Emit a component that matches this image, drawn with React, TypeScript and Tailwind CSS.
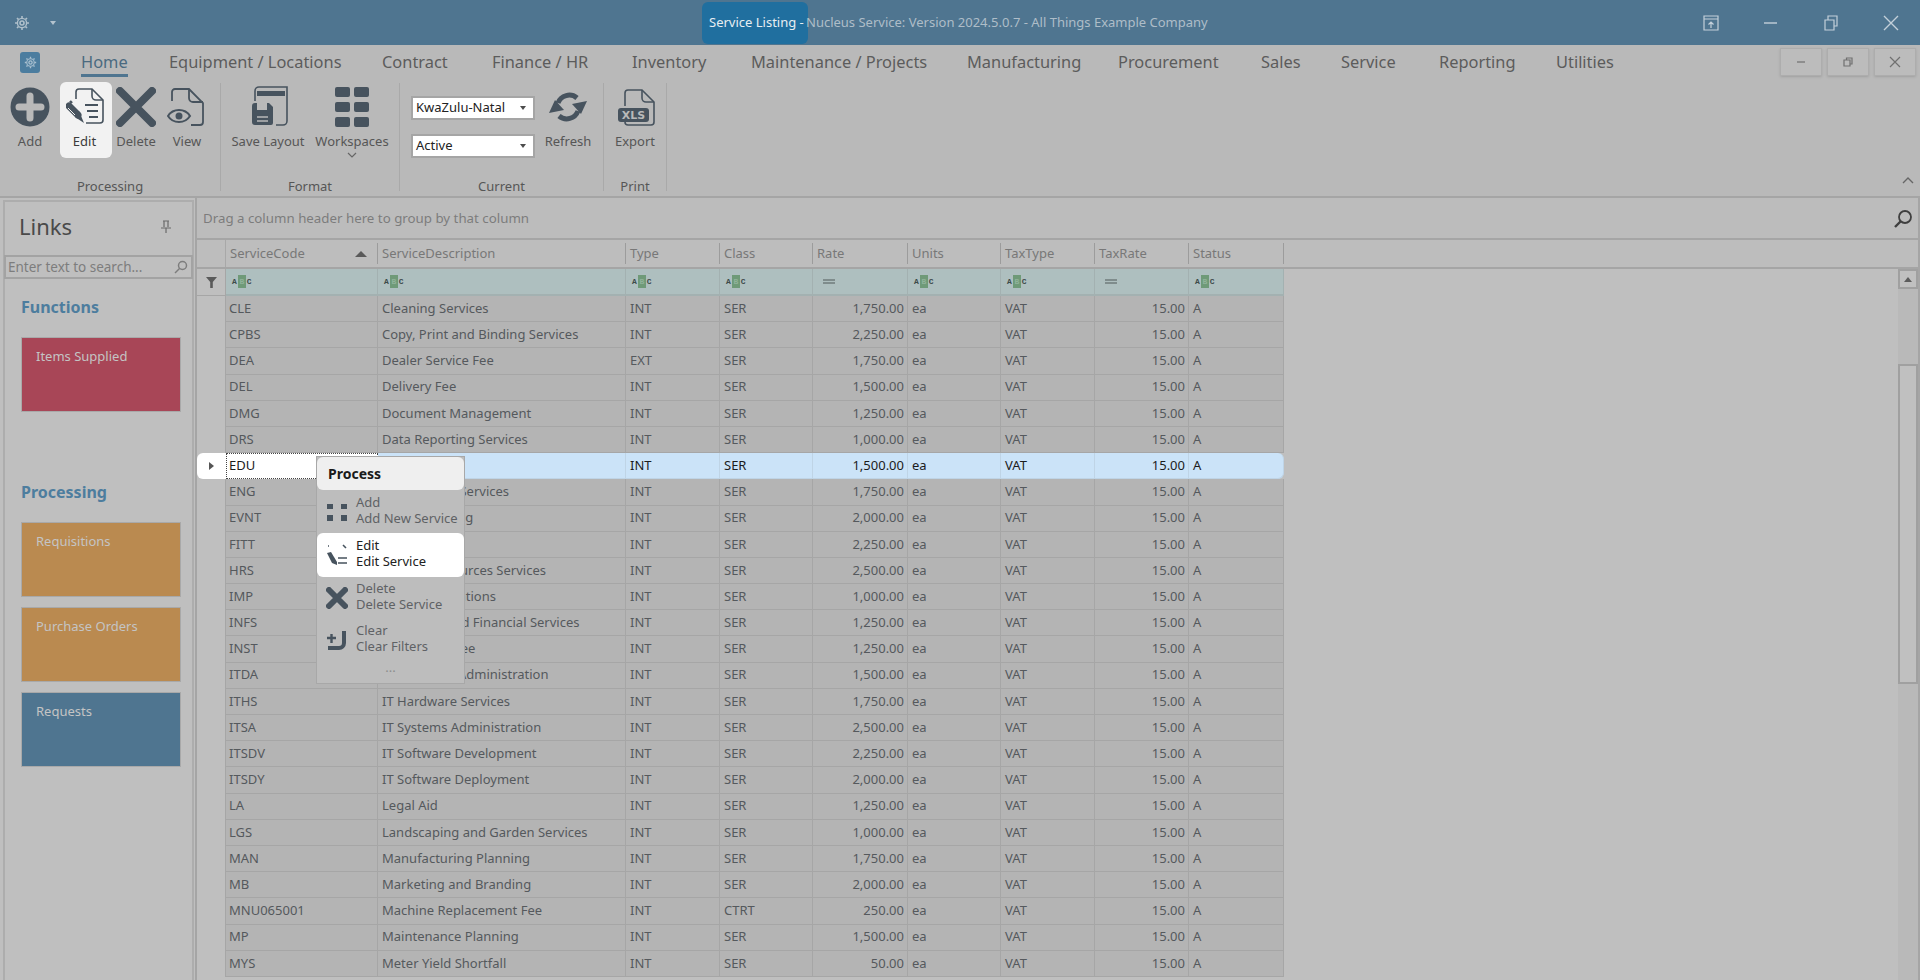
import type { ReactNode } from "react";

const fontStack = "font-['Noto_Sans','DejaVu_Sans',sans-serif]";
const gridCols = "grid grid-cols-[29px_152px_248px_94px_93px_95px_93px_94px_94px_95px]";

type ServiceRow = [string, string, string, string, string];

const rows: ServiceRow[] = [
  ["CLE", "Cleaning Services", "INT", "SER", "1,750.00"],
  ["CPBS", "Copy, Print and Binding Services", "INT", "SER", "2,250.00"],
  ["DEA", "Dealer Service Fee", "EXT", "SER", "1,750.00"],
  ["DEL", "Delivery Fee", "INT", "SER", "1,500.00"],
  ["DMG", "Document Management", "INT", "SER", "1,250.00"],
  ["DRS", "Data Reporting Services", "INT", "SER", "1,000.00"],
  ["EDU", "Education", "INT", "SER", "1,500.00"],
  ["ENG", "Engineering Services", "INT", "SER", "1,750.00"],
  ["EVNT", "Event Planning", "INT", "SER", "2,000.00"],
  ["FITT", "Fitting", "INT", "SER", "2,250.00"],
  ["HRS", "Human Resources Services", "INT", "SER", "2,500.00"],
  ["IMP", "Import Operations", "INT", "SER", "1,000.00"],
  ["INFS", "Insurance and Financial Services", "INT", "SER", "1,250.00"],
  ["INST", "Installation Fee", "INT", "SER", "1,250.00"],
  ["ITDA", "IT Database Administration", "INT", "SER", "1,500.00"],
  ["ITHS", "IT Hardware Services", "INT", "SER", "1,750.00"],
  ["ITSA", "IT Systems Administration", "INT", "SER", "2,500.00"],
  ["ITSDV", "IT Software Development", "INT", "SER", "2,250.00"],
  ["ITSDY", "IT Software Deployment", "INT", "SER", "2,000.00"],
  ["LA", "Legal Aid", "INT", "SER", "1,250.00"],
  ["LGS", "Landscaping and Garden Services", "INT", "SER", "1,000.00"],
  ["MAN", "Manufacturing Planning", "INT", "SER", "1,750.00"],
  ["MB", "Marketing and Branding", "INT", "SER", "2,000.00"],
  ["MNU065001", "Machine Replacement Fee", "INT", "CTRT", "250.00"],
  ["MP", "Maintenance Planning", "INT", "SER", "1,500.00"],
  ["MYS", "Meter Yield Shortfall", "INT", "SER", "50.00"],
];

const tabs: [string, string][] = [
  ["Home", "w-[88px]"],
  ["Equipment / Locations", "w-[213px]"],
  ["Contract", "w-[110px]"],
  ["Finance / HR", "w-[140px]"],
  ["Inventory", "w-[119px]"],
  ["Maintenance / Projects", "w-[216px]"],
  ["Manufacturing", "w-[151px]"],
  ["Procurement", "w-[143px]"],
  ["Sales", "w-[80px]"],
  ["Service", "w-[98px]"],
  ["Reporting", "w-[117px]"],
  ["Utilities", "w-[60px]"],
];

const headers = ["ServiceCode", "ServiceDescription", "Type", "Class", "Rate", "Units", "TaxType", "TaxRate", "Status"];
const ink = "#47535e";

function Gear({ color, size = 16 }: { color: string; size?: number }) {
  return (
    <svg width={size} height={size} viewBox="0 0 16 16" fill="none" stroke={color} strokeWidth="1.6">
      <circle cx="8" cy="8" r="2" />
      <circle cx="8" cy="8" r="4.6" strokeWidth="1.4" />
      <path d="M8 1v2M8 13v2M1 8h2M13 8h2M3 3l1.4 1.4M11.6 11.6 13 13M13 3l-1.4 1.4M4.4 11.6 3 13" />
    </svg>
  );
}

function AddIcon() {
  return (
    <svg width="40" height="40" viewBox="0 0 40 40">
      <circle cx="20" cy="20" r="19.5" fill={ink} />
      <path d="M20 9v22M9 20h22" stroke="#b9b9b9" strokeWidth="7" strokeLinecap="round" />
    </svg>
  );
}

function EditIcon() {
  return (
    <svg width="40" height="40" viewBox="0 0 40 40" fill="none" stroke={ink} strokeWidth="1.6">
      <path d="M10 12V5a3 3 0 0 1 3-3h13l11 11v20a3 3 0 0 1-3 3H20" />
      <path d="M26 2v7a4 4 0 0 0 4 4h7" />
      <path d="M19 18h13M21 24h11M23 30h9" strokeWidth="1.8" />
      <path d="M3 19l9 9" stroke={ink} strokeWidth="7" strokeLinecap="round" />
      <path d="M4 14l2 2" stroke={ink} strokeWidth="2.4" />
      <path d="M13 24l5 12-9-6z" fill={ink} stroke="none" />
      <path d="M2 21l7 7" stroke="#f2f2f2" strokeWidth="1" />
    </svg>
  );
}

function DeleteIcon() {
  return (
    <svg width="40" height="40" viewBox="0 0 40 40">
      <path d="M4 4l32 32M36 4 4 36" stroke={ink} strokeWidth="8" strokeLinecap="round" />
    </svg>
  );
}

function ViewIcon() {
  return (
    <svg width="40" height="40" viewBox="0 0 40 40" fill="none" stroke={ink} strokeWidth="1.8">
      <path d="M5 14V5a3 3 0 0 1 3-3h14l14 14v19a3 3 0 0 1-3 3h-9" />
      <path d="M22 2v9a4 4 0 0 0 4 4h10" />
      <path d="M1 29c5-8 17-8 22 0-5 8-17 8-22 0z" strokeWidth="2" />
      <circle cx="12" cy="29" r="3.5" fill={ink} stroke="none" />
    </svg>
  );
}

function SaveIcon() {
  return (
    <svg width="40" height="42" viewBox="0 0 40 42" fill="none" stroke={ink} strokeWidth="1.6">
      <path d="M7 15V5a4 4 0 0 1 4-4h28v34a4 4 0 0 1-4 4h-7" />
      <path d="M9 5h28v5H9z" fill={ink} stroke="none" />
      <path d="M4 20a3 3 0 0 1 3-3h2v7h10v-7h2l4 4v16a2 2 0 0 1-2 2H7a3 3 0 0 1-3-3z" fill={ink} stroke="none" />
      <path d="M13 18h3v4h-3zM9 31h11M9 35h11" stroke="#b9b9b9" strokeWidth="1.4" />
    </svg>
  );
}

function WorkspacesIcon() {
  return (
    <svg width="34" height="40" viewBox="0 0 34 40" fill={ink}>
      {[0, 15, 30].map((y) => (
        <g key={y}>
          <rect x="0" y={y} width="15" height="10" rx="2" />
          <rect x="19" y={y} width="15" height="10" rx="2" />
        </g>
      ))}
    </svg>
  );
}

function RefreshIcon() {
  return (
    <svg width="38" height="34" viewBox="0 0 38 34" fill="none">
      <path d="M9 13A12 12 0 0 1 28 8" stroke={ink} strokeWidth="5" />
      <path d="M29 21A12 12 0 0 1 10 26" stroke={ink} strokeWidth="5" />
      <path d="M23 14 38 11 32 24z" fill={ink} />
      <path d="M15 20 0 23 6 10z" fill={ink} />
    </svg>
  );
}

function ExportIcon() {
  return (
    <svg width="40" height="40" viewBox="0 0 40 40" fill="none" stroke={ink} strokeWidth="1.6">
      <path d="M10 19V6a3 3 0 0 1 3-3h14l12 12v20a3 3 0 0 1-3 3H13a3 3 0 0 1-3-3" />
      <path d="M27 3v8a4 4 0 0 0 4 4h8" />
      <rect x="3" y="21" width="31" height="14" rx="3" fill={ink} stroke="none" />
      <text x="18.500" y="32" fill="#b9b9b9" stroke="none" fontSize="11" fontWeight="800" textAnchor="middle" fontFamily="DejaVu Sans">
        XLS
      </text>
    </svg>
  );
}

function Caret() {
  return <span className="h-0 w-0 border-x-[3px] border-t-[4px] border-x-transparent border-t-[#4c4c4c]" />;
}

function AbcIcon() {
  return (
    <span className="flex items-center font-['Liberation_Mono',monospace] text-[8px] font-bold leading-none text-[#3d4a4a]">
      <span>A</span>
      <span className="mx-[1px] flex h-[13px] w-[8px] items-center justify-center bg-[#6f9a78] text-[#8fb39a]">B</span>
      <span>C</span>
    </span>
  );
}

function RibbonButton({ icon, label, width, active, extra }: { icon: ReactNode; label: string; width: string; active?: boolean; extra?: ReactNode }) {
  return (
    <div className={`flex h-[76px] flex-col items-center pt-[2px] ${width} ${active ? "rounded-md bg-[#f2f2f2] text-[#3b3b3b]" : "text-[#565656]"}`}>
      <div className="flex h-[46px] items-center justify-center">{icon}</div>
      <span className={`h-[22px] whitespace-nowrap text-[13px] leading-[22px] ${active ? "pr-[3px]" : ""}`}>{label}</span>
      {extra}
    </div>
  );
}

function RibbonGroup({ label, width, children }: { label: string; width: string; children: ReactNode }) {
  return (
    <div className={`flex h-[114px] flex-col ${width}`}>
      <div className="flex flex-1 items-start">{children}</div>
      <span className="h-[20px] text-center text-[13px] leading-[20px] text-[#565656]">{label}</span>
    </div>
  );
}

function GroupDivider() {
  return <div className="mt-[1px] h-[108px] w-px bg-[#a9a9a9]" />;
}

function Select({ value }: { value: string }) {
  return (
    <div className="flex h-[24px] w-[124px] items-center justify-between border-2 border-[#a5a5a5] bg-white pl-[3px] pr-[7px] text-[13px] text-[#222]">
      {value}
      <Caret />
    </div>
  );
}

function LinkCard({ label, color }: { label: string; color: string }) {
  return (
    <div className={`h-[75px] w-[160px] border border-[#a9a9a9] px-[14px] py-[8px] text-[13px] leading-[20px] text-[#c4c4c4] ${color}`}>{label}</div>
  );
}

function MenuItem({ title, sub, icon, active, height }: { title: string; sub: string; icon: ReactNode; active?: boolean; height: string }) {
  return (
    <div className={`flex items-center ${height} ${active ? "rounded-md bg-white text-[#222]" : "text-[#5f6265]"}`}>
      <div className="flex w-[39px] items-center justify-center">{icon}</div>
      <div className="pb-[4px] text-[13px] leading-[16px]">
        <div>{title}</div>
        <div>{sub}</div>
      </div>
    </div>
  );
}

function ContextMenu() {
  return (
    <div className="absolute left-[316px] top-[456px] h-[228px] w-[149px] border border-[#a8a8a8] bg-[#bdbdbd]">
      <div className="flex h-[33px] items-center rounded-md bg-[#efefef] pl-[11px] text-[14px] font-bold text-[#1a1a1a]">Process</div>
      <MenuItem
        title="Add"
        sub="Add New Service"
        height="h-[43px]"
        icon={
          <svg width="22" height="20" viewBox="0 0 22 20" fill={ink}>
            <rect x="1" y="2" width="6" height="5" />
            <rect x="15" y="2" width="6" height="5" />
            <rect x="1" y="13" width="6" height="6" />
            <rect x="15" y="13" width="6" height="6" />
          </svg>
        }
      />
      <MenuItem
        title="Edit"
        sub="Edit Service"
        active
        height="h-[44px]"
        icon={
          <svg width="22" height="24" viewBox="0 0 22 24" fill="none" stroke={ink} strokeWidth="1.6">
            <path d="M2 3h1M17 2l3 3M12 15h9M12 20h9" />
            <path d="M1 10l4-1 6 10v3l-5-2z" fill={ink} stroke="none" />
          </svg>
        }
      />
      <MenuItem
        title="Delete"
        sub="Delete Service"
        height="h-[42px]"
        icon={
          <svg width="22" height="22" viewBox="0 0 22 22">
            <path d="M3 3l16 16M19 3 3 19" stroke={ink} strokeWidth="6" strokeLinecap="round" />
          </svg>
        }
      />
      <MenuItem
        title="Clear"
        sub="Clear Filters"
        height="h-[42px]"
        icon={
          <svg width="22" height="22" viewBox="0 0 22 22" fill="none" stroke={ink} strokeWidth="2.4">
            <path d="M1 9h9M5.500 5v9" />
            <path d="M18 2v12a5 5 0 0 1-5 5H2" strokeWidth="4" />
          </svg>
        }
      />
      <div className="text-center text-[13px] leading-[12px] text-[#8d8d8d]">...</div>
    </div>
  );
}

function ServiceGridRow({ row, selected }: { row: ServiceRow; selected: boolean }) {
  const base = "flex items-center border-b border-r border-[#a6a6a6] px-[4px] whitespace-nowrap overflow-hidden";
  const cell = selected ? `${base} border-[#bfd4e6] bg-[#cbe3f8] text-[#1c1c1c]` : `${base} bg-[#b4b4b4] text-[#55595d]`;
  const values = [row[1], row[2], row[3], row[4], "ea", "VAT", "15.00", "A"];

  return (
    <div className={`${gridCols} h-[26.2px] text-[13px]`}>
      <div className={`flex items-center justify-center ${selected ? "rounded-l-md bg-white" : "border-r border-[#a6a6a6] bg-[#bfbfbf]"}`}>
        {selected && <span className="h-0 w-0 border-y-[4px] border-l-[5px] border-y-transparent border-l-[#555]" />}
      </div>
      <div className={selected ? "flex items-center border border-dotted border-[#444] bg-white px-[2px] text-[#1c1c1c]" : `${cell} pl-[3px]`}>{row[0]}</div>
      {values.map((value, index) => {
        const right = index === 3 || index === 6;
        const last = index === 7;
        return (
          <div key={index} className={`${cell} ${right ? "justify-end pr-[3px]" : ""} ${selected && last ? "rounded-r-md" : ""}`}>
            {value}
          </div>
        );
      })}
    </div>
  );
}

export default function App() {
  return (
    <div className={`relative flex h-[980px] w-[1920px] flex-col overflow-hidden bg-[#bfbfbf] ${fontStack}`}>
      {/* title bar */}
      <div className="flex h-[45px] items-center bg-[#4f7590]">
        <div className="flex w-[702px] items-center pl-[14px]">
          <Gear color="#aebfca" />
          <span className="ml-[20px] h-0 w-0 border-x-[3px] border-t-[4px] border-x-transparent border-t-[#b4c3ce]" />
        </div>
        <div className="flex h-[42px] w-[106px] items-center whitespace-pre rounded-md bg-[#206f9f] pl-[7px] text-[13px] text-[#e8eef2]">Service Listing - </div>
        <div className="-ml-[2px] flex-1 text-[13px] text-[#aebdc8]">Nucleus Service: Version 2024.5.0.7 - All Things Example Company</div>
        <div className="flex items-center gap-[44px] pr-[21px] text-[#c3d0da]">
          <svg width="16" height="16" viewBox="0 0 16 16" fill="none" stroke="currentColor" strokeWidth="1.2">
            <path d="M1 1h14v14H1zM1 4h14M8 13V7M5.500 9.500 8 7l2.500 2.500" />
          </svg>
          <svg width="16" height="16" viewBox="0 0 16 16" stroke="currentColor" strokeWidth="1.4">
            <path d="M1 8h13" />
          </svg>
          <svg width="16" height="16" viewBox="0 0 16 16" fill="none" stroke="currentColor" strokeWidth="1.2">
            <path d="M2 5h9v10H2zM5 5V1h9v10h-3" />
          </svg>
          <svg width="16" height="16" viewBox="0 0 16 16" stroke="currentColor" strokeWidth="1.4">
            <path d="M1 1l14 14M15 1 1 15" />
          </svg>
        </div>
      </div>

      {/* ribbon */}
      <div className="h-[153px] border-b-2 border-[#a5a5a5] bg-[#b9b9b9]">
        <div className="flex h-[37px] items-start">
          <div className="ml-[20px] mt-[7px] flex h-[21px] w-[20px] items-center justify-center rounded-[3px] bg-[#4c7d9f]">
            <Gear color="#a9c0d0" size={13} />
          </div>
          <div className="ml-[41px] flex pt-[5px] text-[16.4px] leading-[24px] text-[#5c5c5c]">
            {tabs.map(([tab, width]) => (
              <div key={tab} className={width}>
                <span className={tab === "Home" ? "inline-block h-[27px] whitespace-nowrap border-b-[3px] border-[#4f7590] text-[#4a6a80]" : "whitespace-nowrap"}>
                  {tab}
                </span>
              </div>
            ))}
          </div>
          <div className="ml-auto mr-[4px] mt-[3px] flex gap-[5px] text-[#707070]">
            {[
              "M5 8h8",
              "M5 6h6v6H5zM7.500 6V4H13v6h-2",
              "M4 3l10 10M14 3 4 13",
            ].map((d) => (
              <div key={d} className="flex h-[28px] w-[42px] items-center justify-center border border-[#adadad] bg-[#bcbcbc] shadow-sm">
                <svg width="18" height="16" viewBox="0 0 18 16" fill="none" stroke="currentColor" strokeWidth="1.2">
                  <path d={d} />
                </svg>
              </div>
            ))}
          </div>
        </div>
        <div className="relative flex">
          <RibbonGroup label="Processing" width="w-[220px]">
            <RibbonButton icon={<AddIcon />} label="Add" width="w-[60px]" />
            <RibbonButton icon={<EditIcon />} label="Edit" width="w-[52px]" active />
            <RibbonButton icon={<DeleteIcon />} label="Delete" width="w-[48px]" />
            <RibbonButton icon={<ViewIcon />} label="View" width="w-[54px]" />
          </RibbonGroup>
          <GroupDivider />
          <RibbonGroup label="Format" width="w-[178px]">
            <div className="w-[7px]" />
            <RibbonButton icon={<SaveIcon />} label="Save Layout" width="w-[80px]" />
            <RibbonButton
              icon={<WorkspacesIcon />}
              label="Workspaces"
              width="w-[88px]"
              extra={
                <svg width="10" height="6" viewBox="0 0 10 6" fill="none" stroke="#666" strokeWidth="1.2">
                  <path d="M1 1l4 4 4-4" />
                </svg>
              }
            />
          </RibbonGroup>
          <GroupDivider />
          <RibbonGroup label="Current" width="w-[203px]">
            <div className="ml-[11px] mt-[14px] flex flex-col gap-[14px]">
              <Select value="KwaZulu-Natal" />
              <Select value="Active" />
            </div>
            <RibbonButton icon={<RefreshIcon />} label="Refresh" width="w-[66px]" />
          </RibbonGroup>
          <GroupDivider />
          <RibbonGroup label="Print" width="w-[62px]">
            <RibbonButton icon={<ExportIcon />} label="Export" width="w-[62px]" />
          </RibbonGroup>
          <GroupDivider />
          <svg className="ml-auto mr-[6px] mt-[94px]" width="12" height="8" viewBox="0 0 12 8" fill="none" stroke="#666" strokeWidth="1.4">
            <path d="M1 7l5-5 5 5" />
          </svg>
        </div>
      </div>

      {/* body */}
      <div className="flex min-h-0 flex-1">
        {/* links panel */}
        <div className="ml-[3px] mr-[1px] mt-[2px] w-[191px] border-x-2 border-t-2 border-[#adadad] bg-[#bfbfbf]">
          <div className="flex h-[49px] items-center justify-between pl-[14px] pr-[20px]">
            <span className="text-[22px] text-[#4a4a4a]">Links</span>
            <svg width="12" height="14" viewBox="0 0 12 14" fill="none" stroke="#6a6a6a" strokeWidth="1.2">
              <path d="M3 1h6M4 1v6M8 1v6M1 8h10M6 8v5" />
            </svg>
          </div>
          <div className="-mx-[1px] mt-[4px] flex h-[24px] items-center justify-between border-2 border-[#a3a3a3] pl-[2px] pr-[3px] text-[13.5px] text-[#7d7d7d]">
            Enter text to search...
            <svg width="14" height="14" viewBox="0 0 14 14" fill="none" stroke="#7d7d7d" strokeWidth="1.5">
              <circle cx="8.500" cy="5.500" r="4" />
              <path d="M5.500 8.500 1 13" />
            </svg>
          </div>
          <div className="pl-[16px]">
            <div className="mt-[18px] h-[20px] text-[16px] font-bold leading-[20px] text-[#4d7d9e]">Functions</div>
            <div className="mt-[20px]">
              <LinkCard label="Items Supplied" color="bg-[#a84657]" />
            </div>
            <div className="mt-[70px] h-[20px] text-[16px] font-bold leading-[20px] text-[#4d7d9e]">Processing</div>
            <div className="mt-[20px] flex flex-col gap-[10px]">
              <LinkCard label="Requisitions" color="bg-[#ba8a50]" />
              <LinkCard label="Purchase Orders" color="bg-[#ba8a50]" />
              <LinkCard label="Requests" color="bg-[#4f7590]" />
            </div>
          </div>
        </div>

        {/* grid */}
        <div className="flex min-w-0 flex-1 flex-col border-x-2 border-[#a5a5a5]">
          <div className="flex h-[42px] shrink-0 items-center justify-between border-b-2 border-[#a5a5a5] bg-[#bcbcbc] pl-[6px] pr-[5px] pt-[2px] text-[13.3px] text-[#7c7c7c]">
            Drag a column header here to group by that column
            <svg width="20" height="20" viewBox="0 0 20 20" fill="none" stroke="#3f3f3f" strokeWidth="1.8">
              <circle cx="12" cy="8" r="6" />
              <path d="M7.500 12.500 2 18" strokeWidth="2.4" />
            </svg>
          </div>
          <div className={`${gridCols} h-[29px] shrink-0 border-b-2 border-[#a5a5a5] bg-[#bdbdbd] text-[13px] text-[#787878]`}>
            <div className="border-r border-[#a8a8a8]" />
            {headers.map((header, index) => (
              <div key={header} className="my-[3px] flex items-center justify-between border-r border-[#9c9c9c] px-[4px]">
                {header}
                {index === 0 && <span className="mr-[6px] h-0 w-0 border-x-[6px] border-b-[6px] border-x-transparent border-b-[#5a5a5a]" />}
              </div>
            ))}
          </div>
          <div className="flex min-h-0 flex-1">
            <div className="min-w-0 flex-1">
              <div className={`${gridCols} h-[27px]`}>
                <div className="flex items-center justify-center border-b border-r border-[#a6a6a6] bg-[#bfbfbf]">
                  <svg width="11" height="11" viewBox="0 0 11 11" fill="#5a5a5a">
                    <path d="M0 0h11L6.800 5v6H4.200V5z" />
                  </svg>
                </div>
                {headers.map((header, index) => (
                  <div key={header} className="flex items-center border-b-2 border-r border-[#a3b1b1] bg-[#aebfbf] pl-[6px] text-[#7a8a8a]">
                    {index === 4 || index === 7 ? <span className="ml-[4px] h-[5px] w-[12px] border-y-2 border-[#7f8c8c]" /> : <AbcIcon />}
                  </div>
                ))}
              </div>
              {rows.map((row) => (
                <ServiceGridRow key={row[0]} row={row} selected={row[0] === "EDU"} />
              ))}
            </div>
            {/* scrollbar */}
            <div className="flex w-[20px] shrink-0 flex-col bg-[#b9b9b9]">
              <div className="flex h-[20px] items-center justify-center border-2 border-[#a0a0a0] bg-[#c0c0c0]">
                <span className="h-0 w-0 border-x-[4px] border-b-[5px] border-x-transparent border-b-[#5c5c5c]" />
              </div>
              <div className="mt-[75px] h-[320px] border-2 border-[#a0a0a0] bg-[#c0c0c0]" />
            </div>
          </div>
        </div>
      </div>

      <ContextMenu />
    </div>
  );
}
